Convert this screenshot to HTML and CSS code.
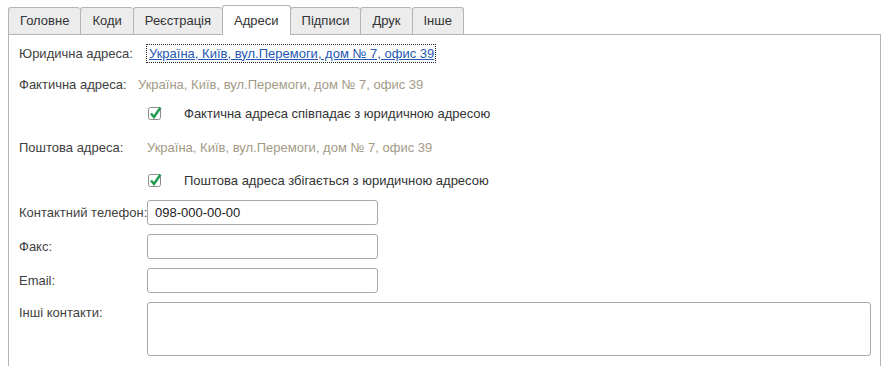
FILE: index.html
```html
<!DOCTYPE html>
<html lang="uk">
<head>
  <meta charset="UTF-8" />
  <title>Адреси</title>
  <link rel="stylesheet" href="styles.css">
</head>
<body>

  <!-- Вкладки -->
  <div class="tabs">
    <div class="tab">Головне</div>
    <div class="tab">Коди</div>
    <div class="tab">Реєстрація</div>
    <div class="tab active">Адреси</div>
    <div class="tab">Підписи</div>
    <div class="tab">Друк</div>
    <div class="tab">Інше</div>
  </div>

  <!-- Панель вкладки "Адреси" -->
  <div class="panel">
    <div class="form-grid">
      <div class="label">Юридична адреса:</div>
      <div class="value"><a class="link" href="#">Україна, Київ, вул.Перемоги, дом № 7, офис 39</a></div>

      <div class="label">Фактична адреса:</div>
      <div class="value address shifted">Україна, Київ, вул.Перемоги, дом № 7, офис 39</div>

      <div class="label"></div>
      <div class="value check">
        <svg class="checkbox" width="14" height="14" viewBox="0 0 14 14">
          <rect x="0.5" y="1.5" width="12" height="12" rx="2" fill="#fff" stroke="#8c8c8c"/>
          <path d="M3 7.5 L6 11 L12.5 1.5" fill="none" stroke="#1f9a4c" stroke-width="2.4"/>
        </svg>
        <span>Фактична адреса співпадає з юридичною адресою</span>
      </div>

      <div class="label">Поштова адреса:</div>
      <div class="value address">Україна, Київ, вул.Перемоги, дом № 7, офис 39</div>

      <div class="label"></div>
      <div class="value check">
        <svg class="checkbox" width="14" height="14" viewBox="0 0 14 14">
          <rect x="0.5" y="1.5" width="12" height="12" rx="2" fill="#fff" stroke="#8c8c8c"/>
          <path d="M3 7.5 L6 11 L12.5 1.5" fill="none" stroke="#1f9a4c" stroke-width="2.4"/>
        </svg>
        <span>Поштова адреса збігається з юридичною адресою</span>
      </div>

      <div class="label">Контактний телефон:</div>
      <div class="value"><input class="field" type="text" value="098-000-00-00"></div>

      <div class="label">Факс:</div>
      <div class="value"><input class="field" type="text"></div>

      <div class="label">Email:</div>
      <div class="value"><input class="field" type="text"></div>

      <div class="label top">Інші контакти:</div>
      <div class="value top"><textarea class="memo"></textarea></div>
    </div>
  </div>

</body>
</html>
```

FILE: styles.css
```css
/* Форма в стилі 1С */
body {
  margin: 0;
  background: #fff;
  color: #404040;
  font-family: 'Liberation Sans', Arial, sans-serif;
  font-size: 13px;
  overflow: hidden;
}

.tabs {
  display: flex;
  align-items: flex-end;
  padding: 5px 0 0 8px;
}

.tab {
  height: 27px;
  box-sizing: border-box;
  padding: 0 11px;
  line-height: 26px;
  border: 1px solid #b4b4b4;
  border-bottom: none;
  border-right: none;
  border-radius: 3px 3px 0 0;
  background: #ececec;
  color: #333;
}

.tab:nth-child(7) {
  border-right: 1px solid #b4b4b4;
}

.tab.active {
  height: 30px;
  line-height: 30px;
  background: #fff;
  position: relative;
  margin-bottom: -1px;
  z-index: 1;
  border-right: 1px solid #b4b4b4;
  margin-right: -1px;
}

.panel {
  margin: 0 11px 0 8px;
  height: 340px;
  border: 1px solid #b4b4b4;
  border-bottom: none;
}

.form-grid {
  display: grid;
  grid-template-columns: 128px 1fr;
  grid-template-rows: 36px 26px 32px 36px 30px 34px 34px 34px 64px;
  align-items: center;
  padding: 0 9px 0 10px;
}

.label {
  color: #404040;
  white-space: nowrap;
}

.label.top {
  align-self: start;
  padding-top: 8px;
}

.value.top {
  align-self: start;
  padding-top: 5px;
}

.link {
  display: inline-block;
  padding: 1px 1px 1px 2px;
  outline: 1px dotted #222;
  outline-offset: 0;
  color: #2458b3;
  line-height: 15px;
}

.address {
  color: #a39a86;
}

.address.shifted {
  margin-left: -9px;
}

.check {
  display: flex;
  align-items: center;
  gap: 22px;
  color: #333;
  padding-left: 1px;
}

.field {
  width: 231px;
  height: 25px;
  box-sizing: border-box;
  border: 1px solid #a8a8a8;
  border-radius: 3px;
  padding: 0 7px;
  font: inherit;
  color: #222;
  display: block;
}

.memo {
  width: 100%;
  height: 54px;
  box-sizing: border-box;
  border: 1px solid #a8a8a8;
  border-radius: 3px;
  resize: none;
  display: block;
  font: inherit;
}
```
